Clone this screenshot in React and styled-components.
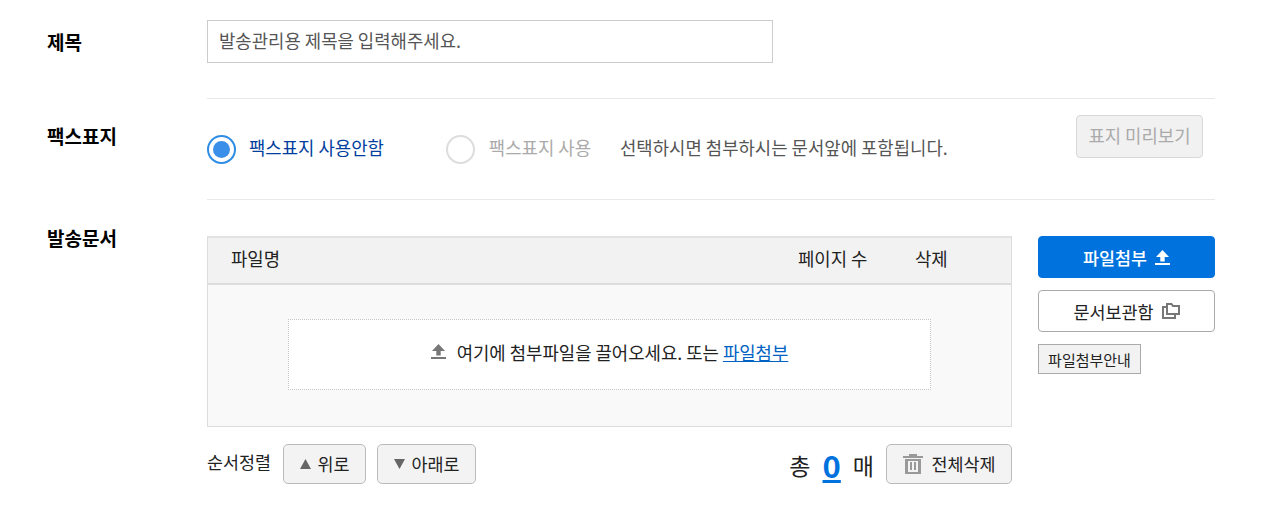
import React from 'react';
import styled, { createGlobalStyle } from 'styled-components';

const GlobalStyle = createGlobalStyle`
  html, body {
    margin: 0;
    padding: 0;
    background: #fff;
    font-family: "Noto Sans CJK KR", "Noto Sans", sans-serif;
    font-size: 17.8px;
    color: #222;
  }
  * { box-sizing: border-box; }
`;

const Page = styled.div`
  width: 1280px;
  height: 530px;
  padding: 20px 65px 0 47px;
  overflow: hidden;
`;

const Row = styled.section`
  display: grid;
  grid-template-columns: 160px 1008px;
  height: ${p => p.$height}px;
`;

const Label = styled.div`
  font-size: 19px;
  font-weight: 700;
  line-height: 26px;
  color: #000;
  padding-top: ${p => p.$top}px;
`;

const Body = styled.div`
  border-bottom: ${p => (p.$line ? '1px solid #e8e8e8' : 'none')};
`;

const TitleInput = styled.div`
  width: 566px;
  height: 43px;
  border: 1px solid #ccc;
  padding: 0 11px 3px;
  display: flex;
  align-items: center;
  color: #555;
`;

const CoverBody = styled(Body)`
  display: flex;
  align-items: center;
  padding-right: 12px;
`;

const RadioRow = styled.label`
  display: flex;
  align-items: center;
  gap: ${p => p.$textGap}px;
  margin-top: 1px;
  margin-right: ${p => p.$gap}px;
  color: ${p => p.$color};
`;

const RadioText = styled.span`
  padding-bottom: 5px;
`;

const RadioDot = styled.span`
  width: 29px;
  height: 29px;
  border-radius: 50%;
  background: #fff;
  border: ${p => (p.$on ? '2px solid #2f8de4' : '2px solid #ddd')};
  display: flex;
  align-items: center;
  justify-content: center;
  &::after {
    content: '';
    display: ${p => (p.$on ? 'block' : 'none')};
    width: 17px;
    height: 17px;
    border-radius: 50%;
    background: #3a90e8;
  }
`;

const Hint = styled.span`
  color: #555;
  flex: 1;
  padding-bottom: 4px;
`;

const PreviewButton = styled.button`
  width: 127px;
  height: 43px;
  margin-top: -25px;
  border: 1px solid #d8d8d8;
  border-radius: 4px;
  background: #f1f1f1;
  color: #aaa;
  font: inherit;
  padding: 0 0 3px;
`;

const DocBody = styled(Body)`
  display: grid;
  grid-template-columns: 805px 177px;
  column-gap: 26px;
  align-content: start;
  padding-top: 36px;
`;

const FileTable = styled.div`
  height: 191px;
  border: 1px solid #ddd;
  border-top-width: 2px;
  border-top-color: #e2e2e2;
  background: #f9f9f9;
  display: flex;
  flex-direction: column;
`;

const TableHead = styled.div`
  height: 48px;
  background: #f2f2f2;
  border-bottom: 2px solid #ddd;
  display: grid;
  grid-template-columns: 567px 117px 1fr;
  align-items: center;
  padding: 0 0 5px 23px;
`;

const DropWrap = styled.div`
  flex: 1;
  padding: 34px 80px 36px;
`;

const DropZone = styled.div`
  height: 71px;
  background: #fff;
  border: 1px dotted #c4c4c4;
  display: flex;
  align-items: center;
  justify-content: center;
  gap: 11px;
  padding-bottom: 6px;
`;

const FileLink = styled.a`
  color: #0062c4;
  text-decoration: underline;
`;

const SideButtons = styled.div`
  display: flex;
  flex-direction: column;
  align-items: flex-start;
`;

const SideButton = styled.button`
  width: 177px;
  height: 42px;
  border-radius: 4px;
  border: 1px solid ${p => (p.$primary ? '#0072de' : '#aaa')};
  background: ${p => (p.$primary ? '#0072de' : '#fff')};
  color: ${p => (p.$primary ? '#fff' : '#222')};
  font: inherit;
  font-size: 17.4px;
  font-weight: ${p => (p.$primary ? 500 : 400)};
  display: flex;
  align-items: center;
  justify-content: center;
  gap: 8px;
  padding: 0;
  margin-bottom: 12px;
`;

const GuideButton = styled.button`
  width: 103px;
  height: 30px;
  border: 1px solid #aaa;
  background: #f2f2f2;
  color: #222;
  font: inherit;
  font-size: 15px;
  padding: 0;
`;

const Toolbar = styled.div`
  grid-column: 1;
  display: flex;
  align-items: center;
  height: 40px;
  margin-top: 17px;
`;

const SortLabel = styled.span`
  font-size: 17.4px;
  margin-right: 12px;
  margin-top: -5px;
`;

const GrayButton = styled.button`
  height: 40px;
  width: ${p => p.$width}px;
  margin-right: ${p => p.$right || 0}px;
  border: 1px solid #bbb;
  border-radius: 5px;
  background: #f3f3f3;
  color: #222;
  font: inherit;
  font-size: 17.4px;
  display: flex;
  align-items: center;
  justify-content: center;
  gap: ${p => p.$gap || 7}px;
  padding: 0 0 1px;
`;

const Triangle = styled.svg`
  width: 11px;
  height: 10px;
  fill: #666;
`;

const Total = styled.div`
  margin-left: auto;
  margin-right: 12px;
  display: flex;
  align-items: center;
  gap: 12px;
  font-size: 23px;
  margin-top: 1px;
`;

const Count = styled.a`
  color: #0072de;
  font-size: 31px;
  font-weight: 700;
  text-decoration: underline;
  line-height: 1;
`;

const UploadIcon = ({ color, size = 15 }) => (
  <svg width={size} height={size} viewBox="0 0 15 15" fill={color}>
    <path d="M7.5 0 L14 7 H9.7 V11.5 H5.3 V7 H1 Z" />
    <rect x="0" y="13" width="15" height="2" />
  </svg>
);

const StorageIcon = () => (
  <svg width="18" height="16" viewBox="0 0 18 16" fill="none" stroke="#777" strokeWidth="2">
    <rect x="1" y="4" width="12" height="11" />
    <path d="M5 11 V1 H9.5 L11 3 H17 V11 Z" fill="#fff" />
  </svg>
);

const TrashIcon = () => (
  <svg width="20" height="20" viewBox="0 0 20 20" fill="#999">
    <rect x="0" y="2" width="20" height="2" />
    <rect x="6" y="0" width="8" height="2" />
    <path d="M2 5 H18 V20 H2 Z M5 7 V18 H15 V7 Z" fillRule="evenodd" />
    <rect x="7" y="8" width="2" height="8" />
    <rect x="11" y="8" width="2" height="8" />
  </svg>
);

const App = () => (
  <Page>
    <GlobalStyle />
    <Row $height={79}>
      <Label $top={9}>제목</Label>
      <Body $line>
        <TitleInput>발송관리용 제목을 입력해주세요.</TitleInput>
      </Body>
    </Row>
    <Row $height={101}>
      <Label $top={24}>팩스표지</Label>
      <CoverBody $line>
        <RadioRow $gap={62} $textGap={13} $color="#003d9e">
          <RadioDot $on />
          <RadioText>팩스표지 사용안함</RadioText>
        </RadioRow>
        <RadioRow $gap={29} $textGap={14} $color="#aaa">
          <RadioDot />
          <RadioText>팩스표지 사용</RadioText>
        </RadioRow>
        <Hint>선택하시면 첨부하시는 문서앞에 포함됩니다.</Hint>
        <PreviewButton>표지 미리보기</PreviewButton>
      </CoverBody>
    </Row>
    <Row $height={300}>
      <Label $top={25}>발송문서</Label>
      <DocBody>
        <FileTable>
          <TableHead>
            <span>파일명</span>
            <span>페이지 수</span>
            <span>삭제</span>
          </TableHead>
          <DropWrap>
            <DropZone>
              <UploadIcon color="#777" />
              <span>여기에 첨부파일을 끌어오세요. 또는 <FileLink>파일첨부</FileLink></span>
            </DropZone>
          </DropWrap>
        </FileTable>
        <SideButtons>
          <SideButton $primary>파일첨부 <UploadIcon color="#fff" /></SideButton>
          <SideButton>문서보관함 <StorageIcon /></SideButton>
          <GuideButton>파일첨부안내</GuideButton>
        </SideButtons>
        <Toolbar>
          <SortLabel>순서정렬</SortLabel>
          <GrayButton $width={83} $right={11}>
            <Triangle viewBox="0 0 11 10"><path d="M5.5 0 L11 10 H0 Z" /></Triangle>
            위로
          </GrayButton>
          <GrayButton $width={99}>
            <Triangle viewBox="0 0 11 10"><path d="M0 0 H11 L5.5 10 Z" /></Triangle>
            아래로
          </GrayButton>
          <Total>총 <Count>0</Count> 매</Total>
          <GrayButton $width={126} $gap={9}>
            <TrashIcon />
            전체삭제
          </GrayButton>
        </Toolbar>
      </DocBody>
    </Row>
  </Page>
);

export default App;
